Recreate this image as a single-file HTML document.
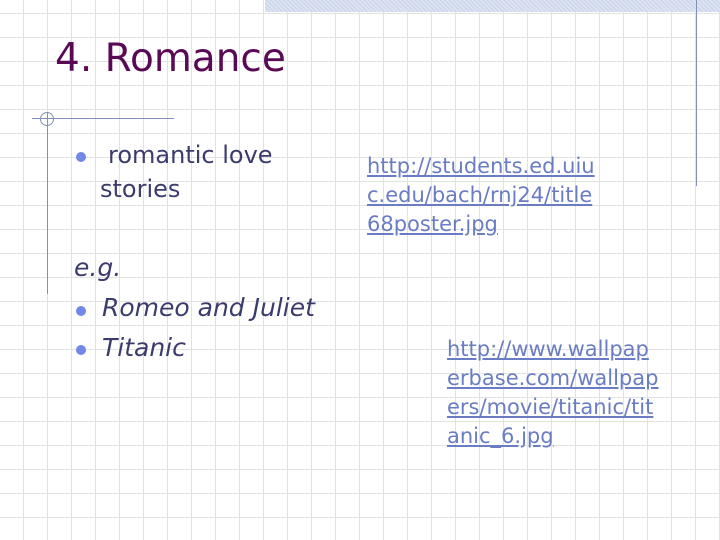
<!DOCTYPE html>
<html><head><meta charset="utf-8"><style>
body{margin:0;width:720px;height:540px;position:relative;overflow:hidden;background:#fff;
background-image:repeating-linear-gradient(90deg,transparent 0 23px,#e2e2e2 23px 24px),repeating-linear-gradient(0deg,transparent 0 23px,#e2e2e2 23px 24px);background-position:0 0,0 1px;font-family:"DejaVu Sans","Liberation Sans",sans-serif}
.a{position:absolute;white-space:nowrap}
.band{position:absolute;left:265px;top:0;width:455px;height:12px;background:#dde3f0;background-image:repeating-linear-gradient(45deg,#c8d2ea 0 1px,transparent 1px 3px)}
.ln{position:absolute;background:#8090b8}
.dot{position:absolute;width:10px;height:10px;border-radius:50%;background:#7088e8}
.b{color:#3b3b6e;font-size:24px}
.i{color:#3b3b6e;font-size:25px;font-style:italic}
.u{color:#6a7cc4;text-decoration:underline;font-size:21px}
</style></head><body>
<div class="band"></div>
<div class="ln" style="left:696px;top:0;width:1px;height:186px"></div>
<div class="ln" style="left:32px;top:118px;width:142px;height:1px"></div>
<div class="ln" style="left:47px;top:112px;width:1px;height:182px"></div>
<div style="position:absolute;left:40px;top:112px;width:12px;height:12px;border:1px solid #8090b8;border-radius:50%"></div>
<div class="a" style="left:55px;top:36px;font-size:39px;color:#5a0a55">4. Romance</div>
<div class="dot" style="left:76px;top:152px"></div>
<div class="a b" style="left:108px;top:141px">romantic love</div>
<div class="a b" style="left:100px;top:175px">stories</div>
<div class="a i" style="left:74px;top:253px">e.g.</div>
<div class="dot" style="left:76px;top:306px"></div>
<div class="a i" style="left:102px;top:293px">Romeo and Juliet</div>
<div class="dot" style="left:76px;top:345px"></div>
<div class="a i" style="left:102px;top:333px">Titanic</div>
<div class="a u" style="left:367px;top:154px">http://students.ed.uiu</div>
<div class="a u" style="left:367px;top:183px">c.edu/bach/rnj24/title</div>
<div class="a u" style="left:367px;top:212px">68poster.jpg</div>
<div class="a u" style="left:447px;top:337px">http://www.wallpap</div>
<div class="a u" style="left:447px;top:366px">erbase.com/wallpap</div>
<div class="a u" style="left:447px;top:395px">ers/movie/titanic/tit</div>
<div class="a u" style="left:447px;top:424px">anic_6.jpg</div>
</body></html>
